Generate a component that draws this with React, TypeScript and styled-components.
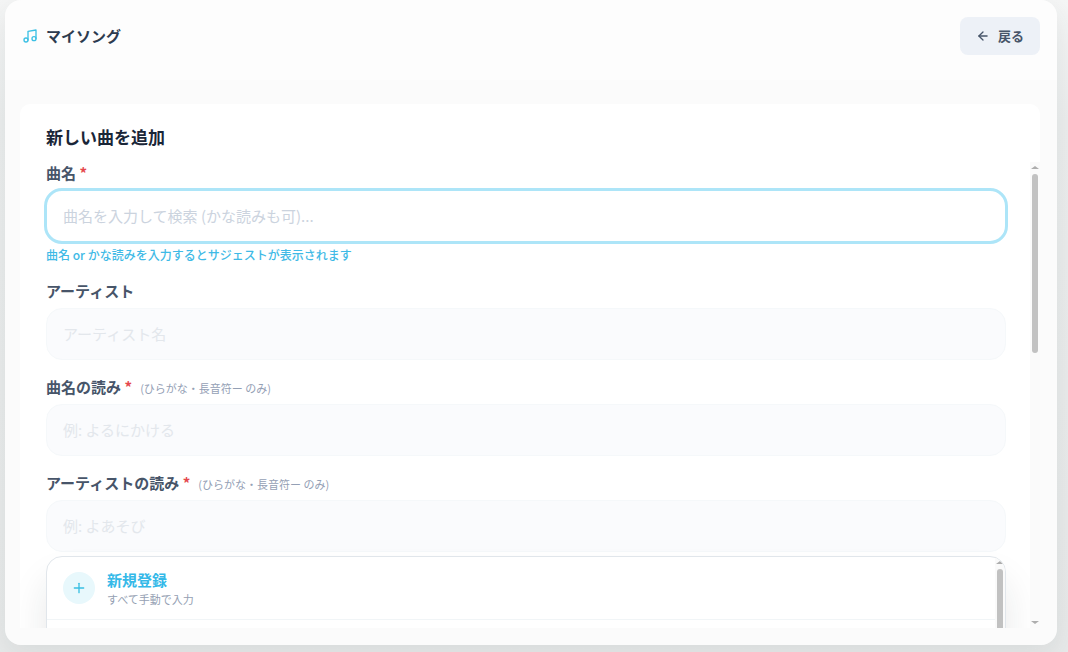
import React from "react";
import styled, { createGlobalStyle, css } from "styled-components";
import { ArrowLeft, Music, Plus } from "lucide-react";

const GlobalStyle = createGlobalStyle`
  *, *::before, *::after { box-sizing: border-box; }
  body {
    margin: 0;
    height: 652px;
    overflow: hidden;
    background: linear-gradient(180deg, #f5f6f6 0px, #eceeee 120px, #e8eaea 652px);
    font-family: "Noto Sans CJK JP", "Noto Sans", sans-serif;
    color: #1e293b;
  }
  input { font-family: inherit; }
`;

const Shell = styled.main`
  display: flex;
  flex-direction: column;
  width: 1052px;
  height: 645px;
  margin-left: 5px;
  border-radius: 16px;
  background: linear-gradient(180deg, #fdfdfd 0 80px, #fbfbfb 80px 100%);
  box-shadow: 0 10px 30px rgba(40, 50, 50, 0.09);
`;

const Header = styled.header`
  display: flex;
  align-items: center;
  justify-content: space-between;
  height: 80px;
  padding: 0 17px 8px;
  margin-bottom: 24px;
`;

const Brand = styled.h1`
  display: flex;
  align-items: center;
  gap: 8px;
  margin: 0;
  font-size: 15px;
  line-height: 24px;
  font-weight: 700;
  color: #2d3b4f;

  svg { color: #3cc0e4; }
`;

const BackButton = styled.button`
  display: flex;
  align-items: center;
  gap: 8px;
  width: 80px;
  height: 38px;
  padding: 0 0 0 16px;
  border: 0;
  border-radius: 8px;
  background: #edf1f7;
  color: #475569;
  font: 700 13px/20px "Noto Sans CJK JP", sans-serif;
`;

const Panel = styled.section`
  display: flex;
  flex-direction: column;
  width: 1020px;
  height: 524px;
  margin-left: 15px;
  border-radius: 10px 10px 0 0;
  background: #fff;
`;

const PanelTitle = styled.h2`
  margin: 0;
  height: 58px;
  padding: 20px 26px 0;
  font-size: 17px;
  line-height: 25px;
  font-weight: 700;
  color: #1a2638;
`;

const ScrollArea = styled.div`
  display: flex;
  height: 466px;
`;

const Form = styled.div`
  flex: 1;
  overflow: hidden;
  padding: 0 24px 0 26px;
`;

const Field = styled.div<{ $height: number }>`
  height: ${({ $height }) => $height}px;
`;

const Label = styled.label`
  display: flex;
  align-items: center;
  height: 20px;
  font-size: 15px;
  font-weight: 700;
  color: #475569;
`;

const Required = styled.span`
  margin-left: 3.5px;
  color: #e5484d;
`;

const LabelNote = styled.small`
  margin: 3px 0 0 8px;
  font-size: 11px;
  font-weight: 400;
  color: #94a0b5;
`;

const TextInput = styled.input<{ $active?: boolean }>`
  display: block;
  width: 960px;
  height: 52px;
  margin-top: 8px;
  padding: 0 16px 2px;
  border: 1px solid #f5f8fa;
  border-radius: 16px;
  outline: 0;
  background: #fafbfd;
  font-size: 15px;
  color: #1e293b;

  &::placeholder { color: #e3e7ec; opacity: 1; }

  ${({ $active }) =>
    $active &&
    css`
      width: 964px;
      height: 56px;
      margin: 6px 0 0 -2px;
      padding: 0 16px 2px;
      border: 3px solid #ade5f8;
      border-radius: 18px;
      background: #fff;

      &::placeholder { color: #cbd3de; }
    `}
`;

const Hint = styled.p`
  margin: 2px 0 0;
  font-size: 12px;
  line-height: 18px;
  font-weight: 500;
  color: #3fbae6;
`;

const Suggestions = styled.div`
  display: flex;
  width: 960px;
  height: 240px;
  border: 1px solid #e1e6eb;
  border-radius: 16px;
  overflow: hidden;
  background: #fff;
  box-shadow: 0 24px 36px rgba(30, 35, 40, 0.1);
`;

const SuggestionList = styled.div`
  flex: 1;
`;

const Suggestion = styled.div`
  display: flex;
  align-items: center;
  gap: 12px;
  height: 63px;
  padding: 0 16px;
  border-bottom: 1px solid #f1f5f7;
`;

const PlusBadge = styled.span`
  display: grid;
  place-items: center;
  width: 32px;
  height: 32px;
  border-radius: 50%;
  background: #e8f8fc;
  color: #38bfe2;
`;

const SuggestionTitle = styled.div`
  font-size: 15px;
  line-height: 22px;
  font-weight: 700;
  color: #35b9e8;
`;

const SuggestionNote = styled.div`
  font-size: 11px;
  line-height: 17px;
  color: #959fb3;
`;

const Track = styled.div`
  display: flex;
  flex-direction: column;
  align-items: center;
  width: 10px;
  background: #fafafa;
`;

const Thumb = styled.div<{ $height: number }>`
  width: 6px;
  height: ${({ $height }) => $height}px;
  margin: 5px 0 auto;
  border-radius: 3px;
  background: #c1c1c1;
`;

const Arrow = styled.i<{ $down?: boolean }>`
  width: 0;
  height: 0;
  margin: ${({ $down }) => ($down ? "0 0 4px" : "4px 0 0")};
  border: solid transparent;
  border-width: ${({ $down }) => ($down ? "3px 4px 0" : "0 4px 3px")};
  border-color: ${({ $down }) => ($down ? "#adadad transparent transparent" : "transparent transparent #adadad")};
`;

function ScrollTrack({ thumb }: { thumb: number }) {
  return (
    <Track>
      <Arrow />
      <Thumb $height={thumb} />
      <Arrow $down />
    </Track>
  );
}

interface FormFieldProps {
  label: string;
  placeholder: string;
  required?: boolean;
  note?: string;
  hint?: string;
  active?: boolean;
  height?: number;
}

function FormField({ label, placeholder, required, note, hint, active, height = 96 }: FormFieldProps) {
  return (
    <Field $height={height}>
      <Label>
        {label}
        {required && <Required>*</Required>}
        {note && <LabelNote>{note}</LabelNote>}
      </Label>
      <TextInput $active={active} placeholder={placeholder} readOnly={!active} />
      {hint && <Hint>{hint}</Hint>}
    </Field>
  );
}

export default function App() {
  return (
    <>
      <GlobalStyle />
      <Shell>
        <Header>
          <Brand>
            <Music size={16} strokeWidth={2} />
            マイソング
          </Brand>
          <BackButton>
            <ArrowLeft size={14} strokeWidth={2.25} />
            戻る
          </BackButton>
        </Header>
        <Panel>
          <PanelTitle>新しい曲を追加</PanelTitle>
          <ScrollArea>
            <Form>
              <FormField
                label="曲名"
                placeholder="曲名を入力して検索 (かな読みも可)..."
                hint="曲名 or かな読みを入力するとサジェストが表示されます"
                required
                active
                height={118}
              />
              <FormField label="アーティスト" placeholder="アーティスト名" />
              <FormField label="曲名の読み" placeholder="例: よるにかける" note="(ひらがな・長音符ー のみ)" required />
              <FormField
                label="アーティストの読み"
                placeholder="例: よあそび"
                note="(ひらがな・長音符ー のみ)"
                required
                height={84}
              />
              <Suggestions>
                <SuggestionList>
                  <Suggestion>
                    <PlusBadge>
                      <Plus size={16} strokeWidth={2} />
                    </PlusBadge>
                    <div>
                      <SuggestionTitle>新規登録</SuggestionTitle>
                      <SuggestionNote>すべて手動で入力</SuggestionNote>
                    </div>
                  </Suggestion>
                </SuggestionList>
                <ScrollTrack thumb={130} />
              </Suggestions>
            </Form>
            <ScrollTrack thumb={179} />
          </ScrollArea>
        </Panel>
      </Shell>
    </>
  );
}
